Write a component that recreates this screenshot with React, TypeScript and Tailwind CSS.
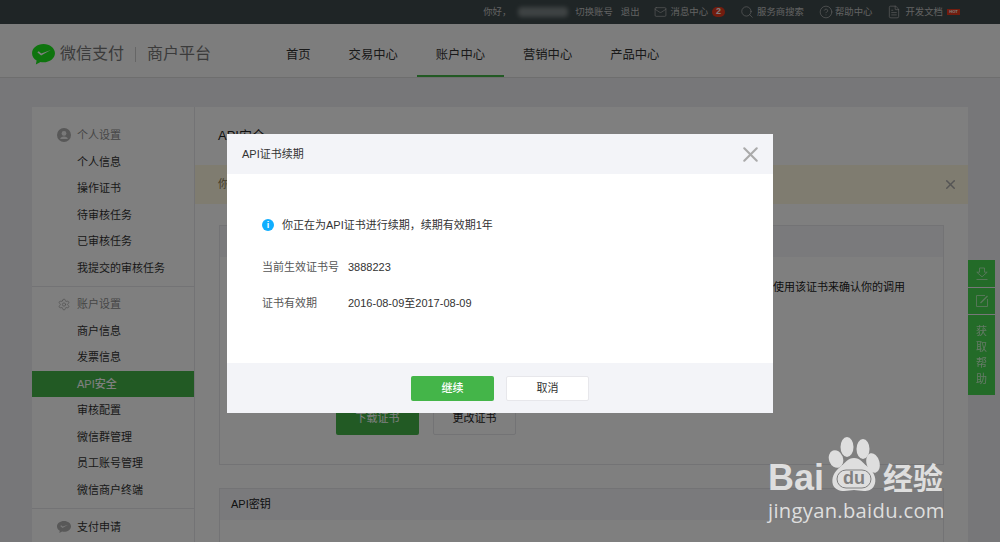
import { FileText, HelpCircle, Mail, Search, Settings, X } from "lucide-react";

const FONT = "font-['Liberation_Sans','Noto_Sans_CJK_SC',sans-serif]";

const WeChatMark = ({ className }: { className: string }) => (
  <svg viewBox="0 0 24 22" className={className}>
    <path d="M12 0C5.4 0 0 4.2 0 9.6c0 3.2 1.9 6 4.8 7.7L4 21.4l4.9-2.6c1 .2 2 .3 3.1.3 6.6 0 12-4.3 12-9.5S18.6 0 12 0z" fill="#1ce81c" />
    <path d="M5.5 8.6l4 3.4L19.6 6.4 9.7 9.9 7 7.5z" fill="#fff" />
  </svg>
);

const UserIcon = () => (
  <svg viewBox="0 0 14 14" className="h-[14px] w-[14px]">
    <circle cx="7" cy="7" r="7" fill="#b0b0b0" />
    <circle cx="7" cy="5.4" r="2.4" fill="#f2f2f2" />
    <path d="M3.2 11c0-1.8 1.7-2.6 3.8-2.6s3.8.8 3.8 2.6z" fill="#f2f2f2" />
  </svg>
);

const PayIcon = () => (
  <svg viewBox="0 0 14 12" className="h-[12px] w-[14px]">
    <path d="M7 0C3.1 0 0 2.4 0 5.4c0 1.8 1.1 3.4 2.8 4.4l-.5 2.2 2.8-1.4c.6.1 1.2.2 1.9.2 3.9 0 7-2.4 7-5.4S10.900 0 7 0z" fill="#b0b0b0" />
    <path d="M3.200 4.900l2.300 2 5.600-3.200-5.500 1.900-1.400-1.300z" fill="#f2f2f2" />
  </svg>
);

const MENU = [
  { title: "个人设置", icon: "user", items: ["个人信息", "操作证书", "待审核任务", "已审核任务", "我提交的审核任务"] },
  { title: "账户设置", icon: "gear", items: ["商户信息", "发票信息", "API安全", "审核配置", "微信群管理", "员工账号管理", "微信商户终端"] },
  { title: "支付申请", icon: "pay", items: [] },
];

const NAV = ["首页", "交易中心", "账户中心", "营销中心", "产品中心"];

const TopBar = () => (
  <div className="flex h-[24px] items-center justify-end bg-[#3e4a4c] pr-[40px] text-[9.4px] text-[#c4c4c4]">
    <span>你好，</span>
    <span className="ml-[7px] h-[10px] w-[50px] rounded-sm bg-[#7d8687] blur-[2px]" />
    <span className="ml-[7px]">切换账号</span>
    <span className="ml-[8px]">退出</span>
    <Mail className="ml-[14px] h-[14px] w-[13px]" strokeWidth={1.1} />
    <span className="ml-[4px]">消息中心</span>
    <span className="ml-[4px] flex h-[10px] w-[13px] items-center justify-center rounded-full bg-[#e5391c] text-[9px] font-bold text-white">2</span>
    <Search className="ml-[15px] h-[14px] w-[14px]" strokeWidth={1.1} />
    <span className="ml-[3px]">服务商搜索</span>
    <HelpCircle className="ml-[15px] h-[14px] w-[14px]" strokeWidth={1.1} />
    <span className="ml-[2px]">帮助中心</span>
    <FileText className="ml-[15px] h-[14px] w-[14px]" strokeWidth={1.1} />
    <span className="ml-[4px]">开发文档</span>
    <span className="ml-[4px] flex h-[6px] w-[13px] items-center justify-center bg-[#e5391c] text-[4px] font-bold leading-none text-white">HOT</span>
  </div>
);

const Header = () => (
  <div className="flex h-[54px] items-stretch border-b border-[#dcdcdc] bg-[#fbfbfb] pl-[32px]">
    <div className="flex w-[235px] items-center pt-[7px]">
      <WeChatMark className="h-[21px] w-[23px]" />
      <span className="ml-[5px] text-[16px] text-[#777]">微信支付</span>
      <span className="mx-[11px] h-[15px] w-px bg-[#ccc]" />
      <span className="text-[16px] text-[#777]">商户平台</span>
    </div>
    {NAV.map((name) => (
      <div
        key={name}
        className={`flex items-center border-b-[2px] px-[19px] pt-[11px] text-[12.3px] text-[#333] ${name === "账户中心" ? "border-[#44b549]" : "border-transparent"}`}
      >
        {name}
      </div>
    ))}
  </div>
);

const Sidebar = () => (
  <div className="w-[163px] shrink-0 border-r border-[#e7e7eb] pt-[15px] text-[11px]">
    {MENU.map((group, i) => (
      <div key={group.title} className={i > 0 ? "border-t border-[#e7e7eb]" : ""}>
        <div className={`flex h-[26.5px] items-center pl-[25px] text-[#8d8d8d] ${i === 1 ? "mt-[4px]" : ""} ${i === 2 ? "mt-[5px]" : ""}`}>
          {group.icon === "user" && <UserIcon />}
          {group.icon === "gear" && <Settings className="h-[13px] w-[14px] text-[#a8a8a8]" strokeWidth={1.4} />}
          {group.icon === "pay" && <PayIcon />}
          <span className={`ml-[6px] ${group.icon === "pay" ? "text-[#333]" : ""}`}>{group.title}</span>
        </div>
        <div className="pb-[5px]">
          {group.items.map((item) => (
            <div
              key={item}
              className={`flex h-[26.5px] items-center pl-[45px] ${item === "API安全" ? "bg-[#44b549] font-medium text-white" : "text-[#333]"}`}
            >
              {item}
            </div>
          ))}
        </div>
      </div>
    ))}
  </div>
);

const Section = ({ title, className, children }: { title: string; className: string; children?: React.ReactNode }) => (
  <div className={`mx-[24px] border border-[#e7e7eb] ${className}`}>
    <div className="flex h-[31px] items-center bg-[#f4f5f9] pl-[11px] text-[11px] text-[#222]">{title}</div>
    {children}
  </div>
);

const MainPanel = () => (
  <div className="min-w-0 flex-1">
    <div className="flex h-[58px] items-center pl-[23px] text-[13px] text-[#222]">API安全</div>
    <div className="flex h-[39px] items-center justify-between bg-[#fff8e0] pl-[23px] pr-[10px] text-[11px] text-[#8a7a50]">
      <span>你</span>
      <X className="h-[15px] w-[15px] text-[#aaa]" strokeWidth={2.4} />
    </div>
    <Section title="API证书" className="mt-[21px] h-[240px]">
      <div className="pr-[38px] pt-[22px] text-right text-[11px] text-[#222]">使用该证书来确认你的调用</div>
      <div className="mt-[106px] flex gap-[14px] pl-[116px] text-[11px]">
        <span className="flex h-[33px] w-[83px] items-center justify-center rounded-[2px] bg-[#44b549] text-white">下载证书</span>
        <span className="flex h-[33px] w-[83px] items-center justify-center rounded-[2px] border border-[#e7e7eb] text-[#222]">更改证书</span>
      </div>
    </Section>
    <Section title="API密钥" className="mt-[23px] h-[60px]" />
  </div>
);

const FloatBar = () => (
  <div className="absolute left-[968px] top-[260px] flex w-[27px] flex-col gap-px text-white">
    <div className="flex h-[27px] items-center justify-center bg-[#46d650]">
      <svg viewBox="0 0 14 14" className="h-[14px] w-[14px] opacity-60" fill="none" stroke="currentColor" strokeWidth="0.9">
        <path d="M4.500 1h5v4.200h2.700L7 9.800 1.800 5.200h2.700z" />
        <path d="M1.500 12.500h11" />
      </svg>
    </div>
    <div className="flex h-[26px] items-center justify-center bg-[#46d650]">
      <svg viewBox="0 0 14 14" className="h-[14px] w-[14px] opacity-60" fill="none" stroke="currentColor" strokeWidth="0.9">
        <path d="M10 1.500H1.500v11h11V5" />
        <path d="M5.500 9L12.500 2" strokeWidth="1.300" />
      </svg>
    </div>
    <div className="flex h-[80px] flex-col items-center justify-center gap-[5px] bg-[#46d650] text-[11px] leading-[11px]">
      <span className="opacity-70">获</span>
      <span className="opacity-70">取</span>
      <span className="opacity-70">帮</span>
      <span className="opacity-70">助</span>
    </div>
  </div>
);

const Dialog = () => (
  <div className="absolute inset-0 z-10 bg-black/50">
    <div className="absolute left-[227px] top-[134px] flex h-[279px] w-[546px] flex-col bg-white">
      <div className="flex h-[40px] items-center justify-between bg-[#f3f4f8] pl-[15px] pr-[10px] text-[11px] text-[#333]">
        <span>API证书续期</span>
        <X className="h-[25px] w-[25px] text-[#aaa]" strokeWidth={2} />
      </div>
      <div className="flex-1 pl-[35px] pt-[43px] text-[11px] text-[#333]">
        <div className="flex h-[16px] items-center">
          <span className="flex h-[12px] w-[12px] items-center justify-center rounded-full bg-[#10aeff] text-[9px] font-bold leading-none text-white">i</span>
          <span className="ml-[8px]">你正在为API证书进行续期，续期有效期1年</span>
        </div>
        <div className="mt-[26px] flex h-[16px] items-center">
          <span className="w-[86px] text-[#555]">当前生效证书号</span>
          <span>3888223</span>
        </div>
        <div className="mt-[20px] flex h-[16px] items-center">
          <span className="w-[86px] text-[#555]">证书有效期</span>
          <span>2016-08-09至2017-08-09</span>
        </div>
      </div>
      <div className="flex h-[50px] items-center justify-center gap-[12px] bg-[#f3f4f8] text-[11px]">
        <span className="flex h-[25px] w-[83px] items-center justify-center rounded-[2px] bg-[#44b549] font-medium text-white">继续</span>
        <span className="flex h-[25px] w-[83px] items-center justify-center rounded-[2px] border border-[#e7e7eb] bg-white text-[#333]">取消</span>
      </div>
    </div>
  </div>
);

const Watermark = () => (
  <div className="absolute left-[768px] top-[434px] z-20 w-[190px] text-[#dedede]">
    <div className="flex h-[62px] items-end">
      <span className="text-[36px] font-bold leading-[37px]">Bai</span>
      <svg viewBox="0 0 52 55" className="mb-[4px] ml-[4px] h-[55px] w-[52px] shrink-0">
        <ellipse cx="19" cy="10" rx="6.500" ry="10" fill="#dedede" />
        <ellipse cx="35" cy="12" rx="6.500" ry="10" fill="#dedede" />
        <ellipse cx="8" cy="22" rx="7" ry="9" fill="#dedede" transform="rotate(-20 8 22)" />
        <ellipse cx="45" cy="26" rx="6.500" ry="10" fill="#dedede" transform="rotate(-15 45 26)" />
        <path d="M26 21c6 0 9 5 14 9 7 6 9 13 6 19-2 4-6 5-10 5-4 0-7-1-10-1s-6 1-10 1c-5 0-9-2-11-6-2-7 1-13 7-18 5-4 8-9 14-9z" fill="#dedede" />
        <rect x="9" y="33" width="34" height="18" rx="9" fill="none" stroke="#808080" strokeWidth="1" />
        <text x="26" y="47" textAnchor="middle" fontSize="18" fontWeight="700" fill="#808080" fontFamily="Liberation Sans">du</text>
      </svg>
      <span className="ml-[3px] text-[30px] font-bold leading-[35px]">经验</span>
    </div>
    <div className="mt-[1px] font-['Open_Sans',sans-serif] text-[20.2px] leading-[26px] tracking-[0.3px]">jingyan.baidu.com</div>
  </div>
);

export default function App() {
  return (
    <div className={`relative h-[542px] w-[1000px] overflow-hidden bg-[#eeeef2] ${FONT}`}>
      <TopBar />
      <Header />
      <div className="mx-[32px] mt-[29px] flex h-[480px] bg-white">
        <Sidebar />
        <MainPanel />
      </div>
      <FloatBar />
      <Dialog />
      <Watermark />
    </div>
  );
}
